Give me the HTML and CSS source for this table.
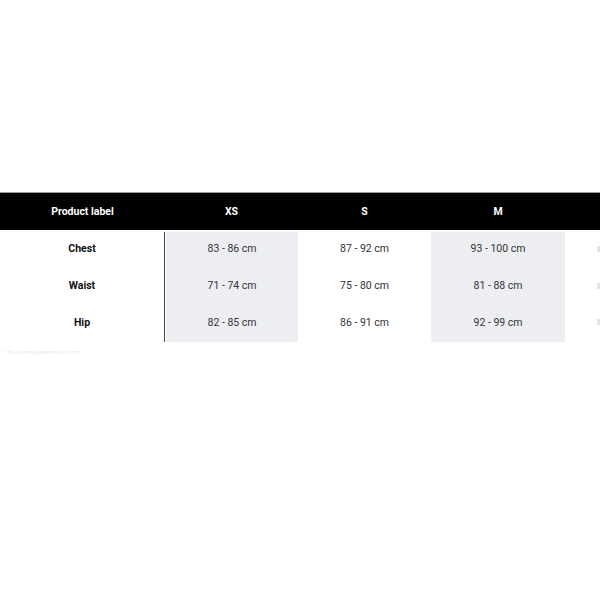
FILE: index.html
```html
<!DOCTYPE html>
<html>
<head>
<meta charset="utf-8">
<link rel="stylesheet" href="styles.css">
</head>
<body>
<div class="page">
  <div class="table">
    <div class="head">
      <div class="cell first">Product label</div>
      <div class="cell">XS</div>
      <div class="cell">S</div>
      <div class="cell">M</div>
      <div class="cell"></div>
    </div>
    <div class="rows">
      <div class="col first">
        <div class="cell label">Chest</div>
        <div class="cell label">Waist</div>
        <div class="cell label">Hip</div>
      </div>
      <div class="col shaded gap">
        <div class="cell">83 - 86 cm</div>
        <div class="cell">71 - 74 cm</div>
        <div class="cell">82 - 85 cm</div>
      </div>
      <div class="col">
        <div class="cell">87 - 92 cm</div>
        <div class="cell">75 - 80 cm</div>
        <div class="cell">86 - 91 cm</div>
      </div>
      <div class="col shaded">
        <div class="cell">93 - 100 cm</div>
        <div class="cell">81 - 88 cm</div>
        <div class="cell">92 - 99 cm</div>
      </div>
      <div class="col edge">
        <div class="cell"><span class="mark"></span></div>
        <div class="cell"><span class="mark"></span></div>
        <div class="cell"><span class="mark"></span></div>
      </div>
    </div>
    <div class="note">* Body measurements in cm</div>
  </div>
</div>
</body>
</html>
```

FILE: styles.css
```css
html, body {
  margin: 0;
  padding: 0;
  background: #fff;
  overflow: hidden;
}
.page {
  width: 600px;
  height: 600px;
  overflow: hidden;
  padding-top: 192px;
  box-sizing: border-box;
  font-family: Roboto, "Liberation Sans", sans-serif;
}
.table {
  width: 600px;
}
.head {
  display: grid;
  grid-template-columns: 165px 133px 133px 134px 35px;
  height: 38px;
  background: #000;
  border-top: 1px solid #9a9a9a;
  box-sizing: border-box;
  color: #fff;
  font-weight: 700;
  font-size: 10.5px;
}
.head .cell {
  display: flex;
  align-items: center;
  justify-content: center;
  padding-bottom: 1px;
}
.rows {
  display: grid;
  grid-template-columns: 165px 133px 133px 134px 35px;
  padding-top: 2px;
}
.col {
  display: flex;
  flex-direction: column;
}
.col.first {
  border-right: 1px solid #4a4a4a;
}
.col.shaded {
  background: #eceef1;
}
.col.gap {
  margin-left: 1px;
}
.rows .cell {
  height: 36.7px;
  display: flex;
  align-items: center;
  justify-content: center;
  font-size: 10.5px;
  color: #333;
  padding-bottom: 3px;
  box-sizing: border-box;
}
.rows .col.edge .cell {
  justify-content: flex-end;
}
.mark {
  width: 3px;
  height: 6px;
  background: #e4e4e4;
}
.rows .cell.label {
  color: #111;
  font-weight: 700;
}
.note {
  margin-top: 6px;
  padding-left: 4px;
  font-size: 6px;
  color: #ececec;
}
```
